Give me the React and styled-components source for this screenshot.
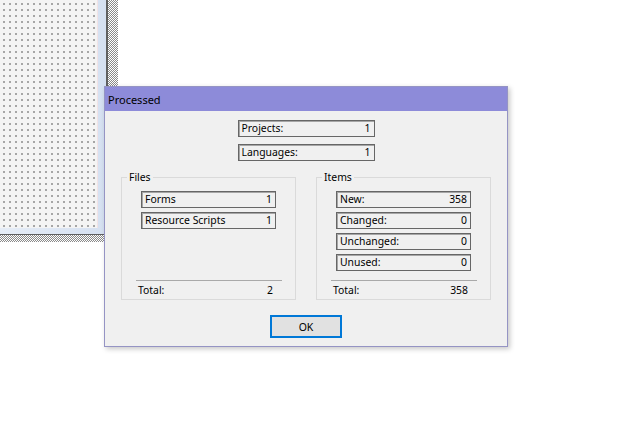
import React from "react";
import styled, { createGlobalStyle } from "styled-components";

const GlobalStyle = createGlobalStyle`
  html, body { margin: 0; padding: 0; background: #ffffff; }
  * { box-sizing: border-box; }
`;

const Screen = styled.div`
  position: relative;
  width: 625px;
  height: 438px;
  overflow: hidden;
  background: #ffffff;
`;

const Hatched = styled.div`
  width: 118px;
  height: 242px;
  padding: 0 10px 7px 0;
  background: repeating-conic-gradient(#8a8a8a 0 25%, #ffffff 0 50%) 0 0 / 2px 2px;
`;

const FormFrame = styled.div`
  width: 108px;
  height: 235px;
  padding: 0 8px 6px 0;
  background: linear-gradient(90deg, #e6edf7, #d5e0f1);
  border-right: 2px solid #5f5f5f;
  border-bottom: 1px solid #5f5f5f;
`;

const Canvas = styled.div`
  width: 98px;
  height: 228px;
  background-color: #f4f4f4;
  background-image: radial-gradient(circle at 1px 1px, #8a8a8a 0.6px, transparent 1px);
  background-size: 6px 6px;
  background-position: 3px 3px;
  border-right: 1px solid #f1e2e5;
`;

const Dialog = styled.div`
  position: absolute;
  left: 104px;
  top: 86px;
  width: 404px;
  height: 261px;
  border: 1px solid #9594c4;
  background: #f0f0f0;
  box-shadow: 2px 2px 5px rgba(0, 0, 0, 0.22);
  display: flex;
  flex-direction: column;
  font-family: "Noto Sans", "Liberation Sans", sans-serif;
  color: #000;
`;

const TitleBar = styled.div`
  height: 24px;
  flex: none;
  background: #8d8bd9;
  display: flex;
  align-items: center;
  padding-left: 3px;
  font-size: 11px;
`;

const Body = styled.div`
  flex: 1;
  display: flex;
  flex-direction: column;
  align-items: center;
  padding-top: 9px;
`;

const Stack = styled.div`
  display: flex;
  flex-direction: column;
  gap: ${(p) => p.$gap}px;
`;

const Field = styled.div`
  width: ${(p) => p.$width}px;
  height: 17px;
  border: 1px solid #666666;
  box-shadow: inset 1px 1px 0 #a6a6a6;
  background: #f0f0f0;
  display: flex;
  align-items: center;
  justify-content: space-between;
  padding: 0 3px 1px 3px;
  font-size: 10.4px;
  line-height: 1;
  white-space: nowrap;
`;

const Groups = styled.div`
  margin-top: 16px;
  display: flex;
  gap: 20px;
`;

const GroupBox = styled.div`
  position: relative;
  width: 175px;
  height: 123px;
  border: 1px solid #dadada;
  display: flex;
  flex-direction: column;
  padding: 13px 0 0 19px;
`;

const GroupLabel = styled.span`
  position: absolute;
  top: -7px;
  left: 5px;
  padding: 0 2px;
  background: #f0f0f0;
  font-size: 10.4px;
  line-height: 12px;
`;

const Footer = styled.div`
  margin-top: auto;
  margin-left: -5px;
  width: 146px;
  border-top: 1px solid #a9a9a9;
`;

const TotalRow = styled.div`
  height: 18px;
  display: flex;
  align-items: center;
  justify-content: space-between;
  padding: 0 9px 0 2px;
  font-size: 10.4px;
`;

const OkButton = styled.button`
  margin-top: 15px;
  width: 72px;
  height: 23px;
  border: 2px solid #0078d7;
  background: #e1e1e1;
  font-family: "Noto Sans", "Liberation Sans", sans-serif;
  font-size: 10.5px;
  color: #000;
  padding: 0;
`;

function CountField({ label, value, width = 135 }) {
  return (
    <Field $width={width}>
      <span>{label}</span>
      <span>{value}</span>
    </Field>
  );
}

function Group({ title, rows, total }) {
  return (
    <GroupBox>
      <GroupLabel>{title}</GroupLabel>
      <Stack $gap={4}>
        {rows.map(([l, v]) => (
          <CountField key={l} label={l} value={v} />
        ))}
      </Stack>
      <Footer>
        <TotalRow>
          <span>Total:</span>
          <span>{total}</span>
        </TotalRow>
      </Footer>
    </GroupBox>
  );
}

export default function App() {
  return (
    <Screen>
      <GlobalStyle />
      <Hatched>
        <FormFrame>
          <Canvas />
        </FormFrame>
      </Hatched>
      <Dialog>
        <TitleBar>Processed</TitleBar>
        <Body>
          <Stack $gap={7}>
            <CountField label="Projects:" value="1" width={137} />
            <CountField label="Languages:" value="1" width={137} />
          </Stack>
          <Groups>
            <Group
              title="Files"
              rows={[
                ["Forms", "1"],
                ["Resource Scripts", "1"],
              ]}
              total="2"
            />
            <Group
              title="Items"
              rows={[
                ["New:", "358"],
                ["Changed:", "0"],
                ["Unchanged:", "0"],
                ["Unused:", "0"],
              ]}
              total="358"
            />
          </Groups>
          <OkButton>OK</OkButton>
        </Body>
      </Dialog>
    </Screen>
  );
}
